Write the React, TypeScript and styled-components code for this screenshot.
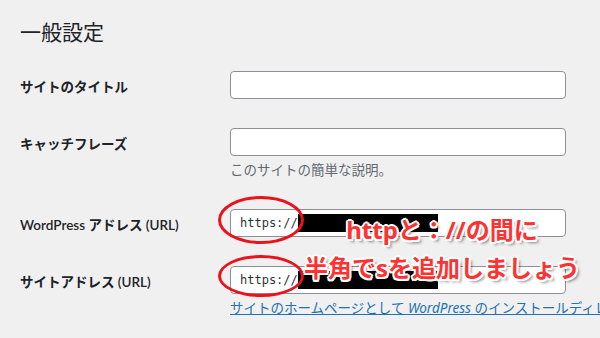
import styled, { createGlobalStyle } from 'styled-components';

const GlobalStyle = createGlobalStyle`
  html, body {
    margin: 0;
    padding: 0;
    background: #f0f0f1;
  }
`;

const App = () => {
  return (
    <>
      <GlobalStyle />
      <Page>
        <Title>一般設定</Title>
        <Form>
          <Row>
            <Label>サイトのタイトル</Label>
            <Field>
              <Input />
            </Field>
          </Row>
          <Row>
            <Label>キャッチフレーズ</Label>
            <Field>
              <Input />
              <Description>このサイトの簡単な説明。</Description>
            </Field>
          </Row>
          <Row>
            <Label>WordPress アドレス (URL)</Label>
            <Field>
              <Input>
                <UrlText>https://</UrlText>
                <Redaction />
              </Input>
            </Field>
          </Row>
          <Row>
            <Label>サイトアドレス (URL)</Label>
            <Field>
              <Input>
                <UrlText>https://</UrlText>
                <Redaction />
              </Input>
              <Description>
                <HelpLink href="#">
                  サイトのホームページとして <em>WordPress</em> のインストールディレ
                </HelpLink>
              </Description>
            </Field>
          </Row>
        </Form>

        {/* annotations drawn over the screenshot */}
        <Circle $top={196} />
        <Circle $top={255} $height={42} />
        <Callout>
          <span>httpと：//の間に</span>
          <span>半角でsを追加しましょう</span>
        </Callout>
      </Page>
    </>
  );
};

export default App;

const Page = styled.div`
  position: relative;
  width: 600px;
  height: 338px;
  overflow: hidden;
  box-sizing: border-box;
  padding: 19px 20px 0;
  background: #f0f0f1;
  color: #1d2327;
  font-family: 'Noto Sans', 'Noto Sans CJK JP', sans-serif;
`;

const Title = styled.h1`
  margin: 0;
  font-size: 21px;
  font-weight: 400;
  line-height: 27px;
  color: #1d2327;
`;

const Form = styled.div`
  display: flex;
  flex-direction: column;
  gap: 29px;
  margin-top: 25px;
`;

const Row = styled.div`
  display: flex;
  align-items: flex-start;
`;

const Label = styled.div`
  width: 210px;
  flex-shrink: 0;
  padding-top: 6px;
  font-family: Lato, 'Noto Sans CJK JP', sans-serif;
  font-size: 13.5px;
  font-weight: 600;
  line-height: 20px;
  white-space: nowrap;
`;

const Field = styled.div`
  display: flex;
  flex-direction: column;
  min-width: 0;
`;

const Input = styled.div`
  display: flex;
  align-items: center;
  box-sizing: border-box;
  width: 336px;
  height: 28px;
  padding: 0 9px;
  background: #fff;
  border: 1px solid #8c8f94;
  border-radius: 4px;
`;

const UrlText = styled.span`
  font-family: 'DejaVu Sans Mono', 'Liberation Mono', monospace;
  font-size: 12px;
  color: #2c3338;
`;

const Redaction = styled.span`
  width: 140px;
  height: 18px;
  background: #000;
`;

const Description = styled.div`
  margin-top: 5px;
  font-size: 13.5px;
  line-height: 19px;
  color: #646970;
  white-space: nowrap;
`;

const HelpLink = styled.a`
  color: #2271b1;
  text-decoration: underline;
`;

const Circle = styled.div<{ $top: number; $height?: number }>`
  position: absolute;
  left: 218px;
  top: ${(p) => p.$top}px;
  width: 86px;
  height: ${(p) => p.$height ?? 48}px;
  box-sizing: border-box;
  border: 3px solid #e8131b;
  border-radius: 50%;
`;

const Callout = styled.div`
  position: absolute;
  left: 292px;
  top: 211px;
  width: 300px;
  display: flex;
  flex-direction: column;
  align-items: center;
  font-size: 24px;
  font-weight: 700;
  line-height: 38px;
  color: #ff3232;
  white-space: nowrap;
  text-shadow:
    2px 0 0 #fff, -2px 0 0 #fff, 0 2px 0 #fff, 0 -2px 0 #fff,
    1.5px 1.5px 0 #fff, -1.5px 1.5px 0 #fff, 1.5px -1.5px 0 #fff, -1.5px -1.5px 0 #fff,
    3px 3px 3px rgba(0, 0, 0, 0.45);
`;
